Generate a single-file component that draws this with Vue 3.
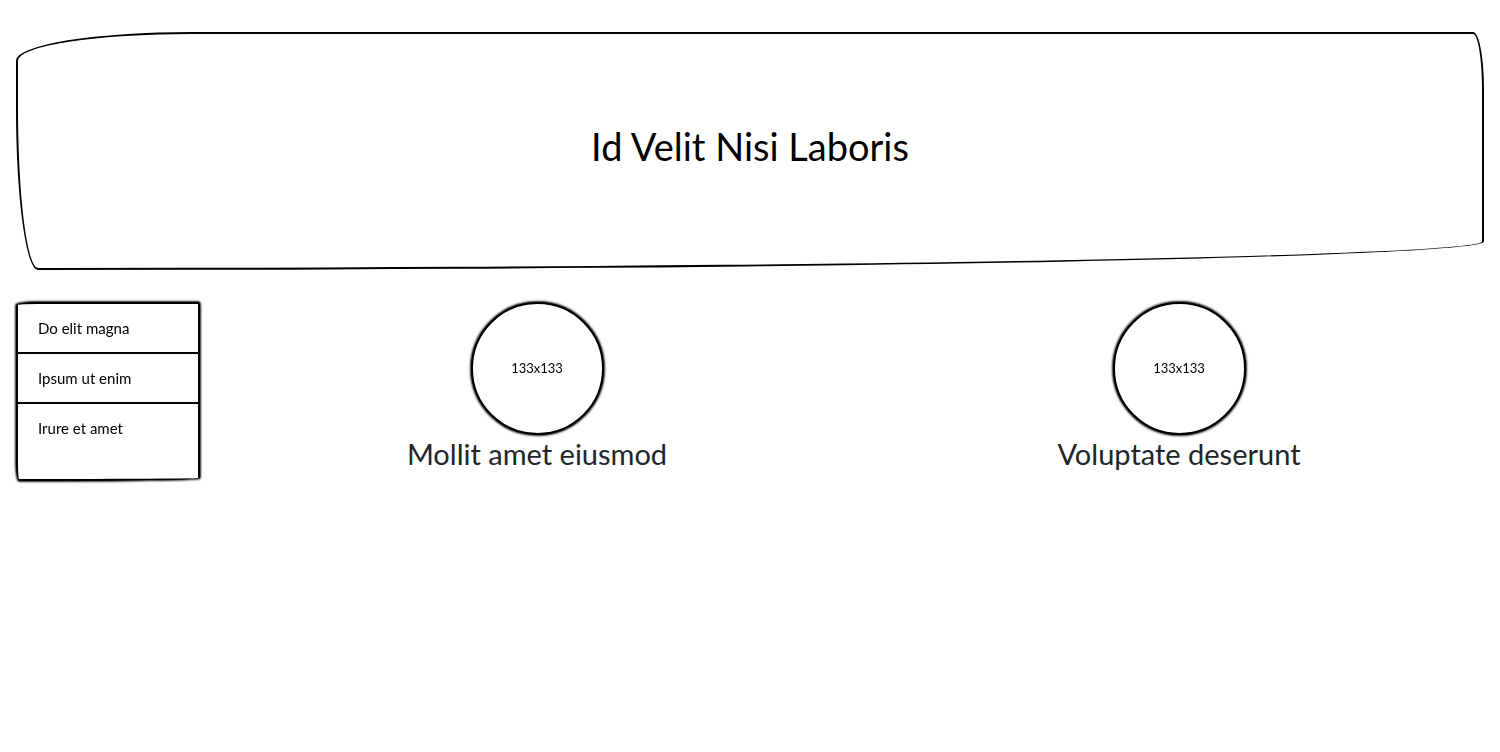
<script setup>
const links = ['Do elit magna', 'Ipsum ut enim', 'Irure et amet']
const cards = ['Mollit amet eiusmod', 'Voluptate deserunt']
</script>

<template>
  <div class="page">
    <header class="hero">
      <h1>Id Velit Nisi Laboris</h1>
    </header>
    <div class="content">
      <nav class="menu">
        <ul>
          <li v-for="link in links" :key="link"><a href="#">{{ link }}</a></li>
        </ul>
      </nav>
      <main class="cards">
        <section v-for="card in cards" :key="card" class="card">
          <div class="avatar">133x133</div>
          <h2>{{ card }}</h2>
        </section>
      </main>
    </div>
  </div>
</template>

<style>
body {
  margin: 0;
  background: #fff;
}
</style>

<style scoped>
.page {
  padding: 32px 0;
  font-family: Lato, "Open Sans", sans-serif;
  font-size: 15px;
  line-height: 24px;
  color: #000;
}
.hero {
  box-sizing: border-box;
  margin: 0 16px 32px;
  padding: 80px 16px 90px;
  border: 2px solid #000;
  border-radius: 12% 11px 98% 22px / 12% 24% 12% 68%;
  text-align: center;
}
h1 {
  margin: 0;
  font-size: 38px;
  font-weight: 400;
  line-height: 64px;
}
.content {
  display: flex;
  gap: 16px;
  align-items: flex-start;
}
.menu {
  box-sizing: border-box;
  flex: 0 0 184px;
  margin-left: 16px;
  padding-bottom: 27px;
  border: 2px solid #000;
  border-radius: 22px 1px 178px 3px / 3px 6px 3px 22px;
  background: #fff;
  filter: drop-shadow(0 0 1px #000) drop-shadow(0 0 1px #000);
}
ul {
  margin: 0;
  padding: 0;
  list-style: none;
}
li + li {
  border-top: 2px solid #000;
}
a {
  display: block;
  padding: 12px 20px;
  color: inherit;
  text-decoration: none;
}
.cards {
  display: flex;
  flex: 1;
}
.card {
  display: flex;
  flex: 1;
  flex-direction: column;
  align-items: center;
}
.avatar {
  box-sizing: border-box;
  display: flex;
  align-items: center;
  justify-content: center;
  width: 133px;
  height: 133px;
  padding-bottom: 2px;
  border: 2px solid #000;
  border-radius: 50%;
  background: #fff;
  filter: drop-shadow(0 0 1px #000) drop-shadow(0 0 1px #000);
  font-size: 13px;
}
h2 {
  margin: 0;
  color: #212529;
  font-size: 29px;
  font-weight: 400;
  line-height: 38px;
}
</style>
